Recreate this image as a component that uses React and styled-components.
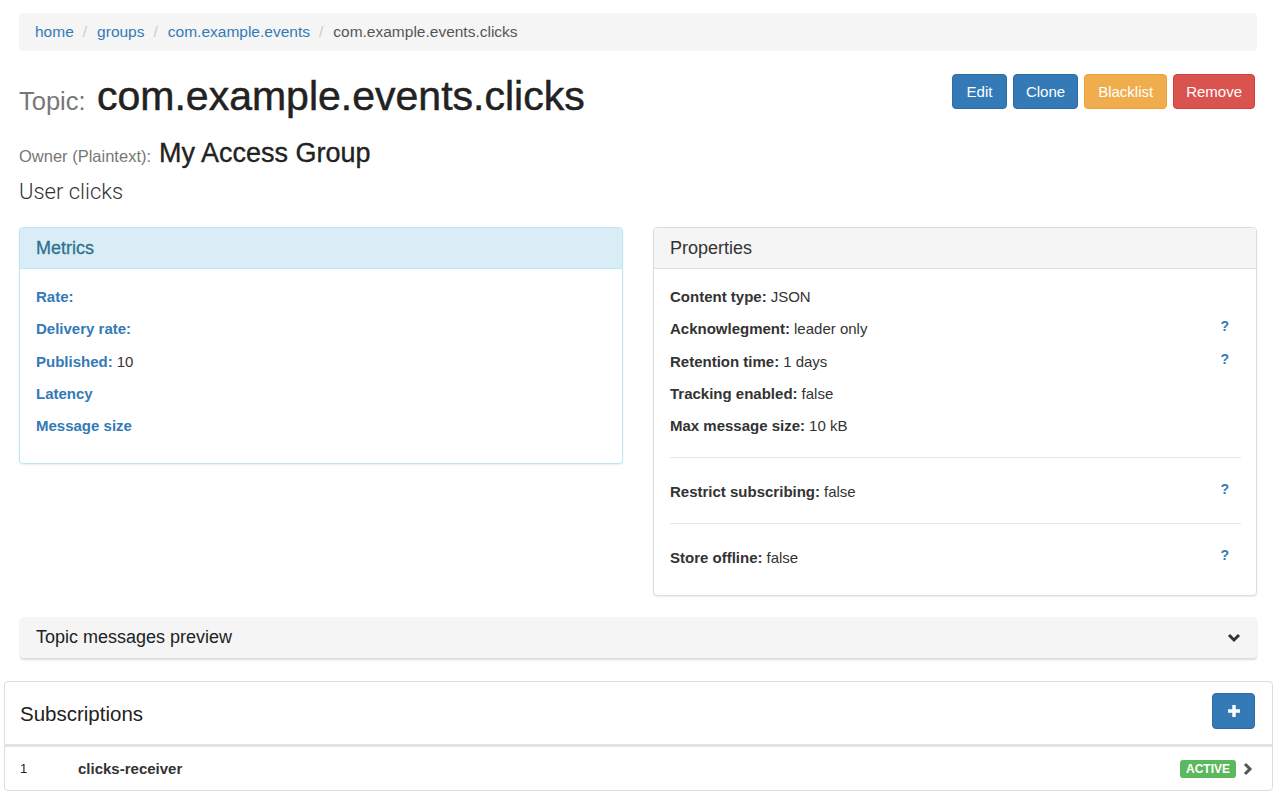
import React from "react";
import styled, { createGlobalStyle, css } from "styled-components";

const GlobalStyle = createGlobalStyle`
  html, body {
    margin: 0;
    padding: 0;
    background: #fff;
  }
  body {
    font-family: "Liberation Sans", Arial, Helvetica, sans-serif;
    font-size: 15px;
    line-height: 1.42857;
    color: #333;
  }
  * {
    box-sizing: border-box;
  }
`;

const Page = styled.div`
  padding: 0 7px 0 4px;
`;

const Main = styled.div`
  padding: 13px 16px 0 15px;
`;

const Breadcrumb = styled.ol`
  display: flex;
  list-style: none;
  margin: 0;
  padding: 8px 16px;
  height: 38px;
  background: #f5f5f5;
  border-radius: 4px;
  font-size: 15.5px;
  line-height: 22px;

  li + li::before {
    content: "/";
    color: #ccc;
    padding: 0 10px 0 9px;
  }
`;

const Crumb = styled.li`
  color: ${(p) => (p.$active ? "#555" : "#337ab7")};
`;

const TitleRow = styled.div`
  display: flex;
  justify-content: space-between;
  align-items: flex-start;
  margin-top: 23px;
`;

const Title = styled.h1`
  margin: 0;
  font-size: 41px;
  font-weight: 400;
  line-height: 45px;
  color: #222;
  -webkit-text-stroke: 0.5px #222;
`;

const TitleLabel = styled.small`
  font-size: 25.5px;
  color: #777;
  -webkit-text-stroke: 0;
  margin-right: 0;
`;

const ButtonGroup = styled.div`
  display: flex;
  gap: 6px;
  margin-right: 2px;
`;

const variants = {
  primary: css`
    background: #337ab7;
    border-color: #2e6da4;
  `,
  warning: css`
    background: #f0ad4e;
    border-color: #eea236;
  `,
  danger: css`
    background: #d9534f;
    border-color: #d43f3a;
  `,
};

const Button = styled.button`
  font-family: inherit;
  font-size: 15px;
  line-height: 21px;
  padding: 6px ${(p) => p.$pad || 12}px;
  border: 1px solid;
  border-radius: 4px;
  color: #fff;
  cursor: pointer;
  ${(p) => variants[p.$variant || "primary"]}
`;

const Owner = styled.h3`
  margin: 15px 0 0 0;
  font-size: 27px;
  font-weight: 400;
  line-height: 28px;
  color: #222;
  -webkit-text-stroke: 0.35px #222;
`;

const OwnerLabel = styled.small`
  font-size: 16.5px;
  color: #777;
  -webkit-text-stroke: 0;
  margin-right: 8px;
`;

const Lead = styled.p`
  margin: 7px 0 0 0;
  font-family: Roboto, "Liberation Sans", sans-serif;
  font-size: 22px;
  font-weight: 300;
  line-height: 29px;
  color: #333;
`;

const PanelGrid = styled.div`
  display: grid;
  grid-template-columns: 1fr 1fr;
  gap: 30px;
  align-items: start;
  margin-top: 21px;
`;

const Panel = styled.div`
  border: 1px solid ${(p) => (p.$info ? "#bce8f1" : "#ddd")};
  border-radius: 4px;
  background: #fff;
  box-shadow: 0 1px 2px rgba(0, 0, 0, 0.08);
`;

const PanelHeading = styled.div`
  padding: 9px 15px 9px 16px;
  height: 41px;
  font-size: 18px;
  line-height: 22px;
  background: ${(p) => (p.$info ? "#d9edf7" : "#f5f5f5")};
  color: ${(p) => (p.$info ? "#31708f" : "#333")};
  border-bottom: 1px solid ${(p) => (p.$info ? "#bce8f1" : "#ddd")};
  border-radius: 3px 3px 0 0;
  -webkit-text-stroke: ${(p) => (p.$info ? "0.3px #31708f" : "0")};
`;

const PanelBody = styled.div`
  padding: 17px 15px 16px 16px;
`;

const Item = styled.div`
  display: flex;
  justify-content: space-between;
  align-items: flex-start;
  line-height: 22px;
  margin-bottom: 10.3px;
`;

const Label = styled.b`
  color: ${(p) => (p.$link ? "#337ab7" : "#333")};
  margin-right: 4px;
`;

const Help = styled.span`
  font-weight: 700;
  font-size: 14px;
  line-height: 16px;
  color: #337ab7;
  margin-right: 12px;
`;

const Rule = styled.hr`
  border: 0;
  border-top: 1px solid #e6e6e6;
  margin: 20px 0 23px 0;
`;

const CollapseBar = styled.div`
  display: flex;
  align-items: center;
  justify-content: space-between;
  margin-top: 21px;
  margin-left: 1px;
  height: 41px;
  padding: 0 16px 0 16px;
  background: #f5f5f5;
  border-radius: 4px;
  box-shadow: 0 2px 2px rgba(0, 0, 0, 0.14);
  font-size: 18px;
  color: #222;
`;

const Card = styled.div`
  margin-top: 23px;
  border: 1px solid #ddd;
  border-radius: 4px;
  background: #fff;
`;

const CardHeader = styled.div`
  display: flex;
  align-items: center;
  justify-content: space-between;
  height: 65px;
  padding: 0 17px 0 15px;
  border-bottom: 3px solid #e3e3e3;
`;

const CardTitle = styled.h4`
  margin: 0;
  font-size: 20.5px;
  font-weight: 400;
  color: #222;
`;

const IconButton = styled(Button)`
  width: 43px;
  height: 36px;
  padding: 0;
  display: flex;
  align-items: center;
  justify-content: center;
  margin-top: -4px;
`;

const SubRow = styled.div`
  display: flex;
  align-items: center;
  height: 43px;
  padding: 0 19px 0 15px;
`;

const SubIndex = styled.span`
  width: 58px;
  font-size: 13px;
  color: #222;
`;

const SubName = styled.span`
  flex: 1;
  font-weight: 700;
  color: #333;
`;

const Badge = styled.span`
  background: #5cb85c;
  color: #fff;
  font-size: 12px;
  font-weight: 700;
  line-height: 12px;
  padding: 3px 6px;
  border-radius: 3px;
  margin-right: 7px;
`;

const ChevronDown = () => (
  <svg width="14" height="10" viewBox="0 0 14 10">
    <polyline points="2,2 7,7 12,2" fill="none" stroke="#333" strokeWidth="3" />
  </svg>
);

const ChevronRight = () => (
  <svg width="10" height="14" viewBox="0 0 10 14">
    <polyline points="2,2 7,7 2,12" fill="none" stroke="#555" strokeWidth="3" />
  </svg>
);

const PlusIcon = () => (
  <svg width="14" height="14" viewBox="0 0 14 14">
    <path d="M7 1v12M1 7h12" stroke="#fff" strokeWidth="3.4" />
  </svg>
);

const metrics = [
  ["Rate:", ""],
  ["Delivery rate:", ""],
  ["Published:", "10"],
  ["Latency", ""],
  ["Message size", ""],
];

const properties = [
  ["Content type:", "JSON", false],
  ["Acknowlegment:", "leader only", true],
  ["Retention time:", "1 days", true],
  ["Tracking enabled:", "false", false],
  ["Max message size:", "10 kB", false],
];

export default function App() {
  return (
    <>
      <GlobalStyle />
      <Page>
        <Main>
          <Breadcrumb>
            <Crumb>home</Crumb>
            <Crumb>groups</Crumb>
            <Crumb>com.example.events</Crumb>
            <Crumb $active>com.example.events.clicks</Crumb>
          </Breadcrumb>

          <TitleRow>
            <Title>
              <TitleLabel>Topic:</TitleLabel> com.example.events.clicks
            </Title>
            <ButtonGroup>
              <Button $pad={13.5}>Edit</Button>
              <Button>Clone</Button>
              <Button $variant="warning" $pad={13}>
                Blacklist
              </Button>
              <Button $variant="danger">Remove</Button>
            </ButtonGroup>
          </TitleRow>

          <Owner>
            <OwnerLabel>Owner (Plaintext):</OwnerLabel>My Access Group
          </Owner>
          <Lead>User clicks</Lead>

          <PanelGrid>
            <Panel $info>
              <PanelHeading $info>Metrics</PanelHeading>
              <PanelBody>
                {metrics.map(([k, v]) => (
                  <Item key={k}>
                    <span>
                      <Label $link>{k}</Label>
                      {v}
                    </span>
                  </Item>
                ))}
              </PanelBody>
            </Panel>

            <Panel>
              <PanelHeading>Properties</PanelHeading>
              <PanelBody>
                {properties.map(([k, v, help]) => (
                  <Item key={k}>
                    <span>
                      <Label>{k}</Label>
                      {v}
                    </span>
                    {help && <Help>?</Help>}
                  </Item>
                ))}
                <Rule />
                <Item>
                  <span>
                    <Label>Restrict subscribing:</Label>false
                  </span>
                  <Help>?</Help>
                </Item>
                <Rule />
                <Item>
                  <span>
                    <Label>Store offline:</Label>false
                  </span>
                  <Help>?</Help>
                </Item>
              </PanelBody>
            </Panel>
          </PanelGrid>

          <CollapseBar>
            <span>Topic messages preview</span>
            <ChevronDown />
          </CollapseBar>
        </Main>

        <Card>
          <CardHeader>
            <CardTitle>Subscriptions</CardTitle>
            <IconButton aria-label="add subscription">
              <PlusIcon />
            </IconButton>
          </CardHeader>
          <SubRow>
            <SubIndex>1</SubIndex>
            <SubName>clicks-receiver</SubName>
            <Badge>ACTIVE</Badge>
            <ChevronRight />
          </SubRow>
        </Card>
      </Page>
    </>
  );
}
